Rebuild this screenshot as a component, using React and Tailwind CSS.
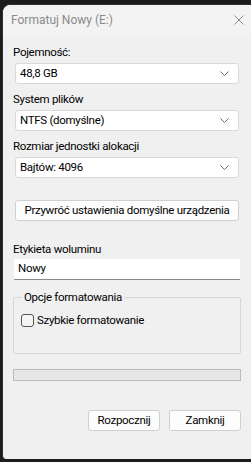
import React from "react";

const Chevron = () => (
  <svg width="9" height="5" viewBox="0 0 9 5" className="shrink-0">
    <path d="M0.5 0.5 L4.5 4.5 L8.5 0.5" fill="none" stroke="#6b6b6b" strokeWidth="1" />
  </svg>
);

function Combo({ value }) {
  return (
    <div className="mx-[12px] h-[21px] flex items-center justify-between bg-white border border-[#d9d9d9] rounded-[3px] pl-[4px] pr-[9px]">
      <span>{value}</span>
      <Chevron />
    </div>
  );
}

export default function App() {
  return (
    <div className="w-[251px] h-[462px] bg-[#1c1c1c] pt-[4px] pl-[2px] pb-[3px] overflow-hidden" style={{ fontFamily: 'Roboto, "Liberation Sans", sans-serif' }}>
      <div className="h-full bg-[#f0f0f0] rounded-tl-[8px] rounded-bl-[4px] flex flex-col border-l border-t border-[#2e2e2e]">
        <div className="h-[30px] bg-[#f3f3f3] rounded-tl-[8px] flex items-center justify-between pl-[8px] pr-[7px]">
          <span className="text-[12px] text-[#8a8a8a] whitespace-nowrap">Formatuj Nowy (E:)</span>
          <svg width="10" height="10" viewBox="0 0 10 10">
            <path d="M0.5 0.5 L9.5 9.5 M9.5 0.5 L0.5 9.5" stroke="#8a8a8a" strokeWidth="1" />
          </svg>
        </div>
        <div className="flex flex-col text-[11.5px] tracking-[-0.3px] text-black whitespace-nowrap">
          <div className="mt-[9px] mb-[3px] px-[10px] leading-[16px]">Pojemność:</div>
          <Combo value="48,8 GB" />
          <div className="mt-[7px] mb-[3px] px-[10px] leading-[16px]">System plików</div>
          <Combo value="NTFS (domyślne)" />
          <div className="mt-[7px] mb-[3px] px-[10px] leading-[16px]">Rozmiar jednostki alokacji</div>
          <Combo value="Bajtów: 4096" />
          <div className="mt-[22px] mx-[12px] h-[21px] bg-[#fdfdfd] border border-[#d0d0d0] rounded-[3px] flex items-center justify-center">
            Przywróć ustawienia domyślne urządzenia
          </div>
          <div className="mt-[20px] mb-[2px] px-[10px] leading-[16px]">Etykieta woluminu</div>
          <div className="mx-[11px] h-[21px] bg-white border-b border-[#8a8a8a] flex items-center pl-[4px]">Nowy</div>
          <div className="relative mt-[17px] mx-[10px] h-[57px] border border-[#d6d6d6] rounded-[2px]">
            <span className="absolute left-[8px] top-[-9px] bg-[#f0f0f0] px-[2px] leading-[16px]">Opcje formatowania</span>
            <div className="mt-[14px] ml-[7px] flex items-center gap-[3px]">
              <div className="w-[13px] h-[13px] border border-[#555] rounded-[3px] bg-[#f5f5f5]" />
              <span>Szybkie formatowanie</span>
            </div>
          </div>
          <div className="mt-[15px] mx-[10px] h-[12px] bg-[#e6e6e6] border border-[#bcbcbc]" />
          <div className="mt-[29px] flex justify-end gap-[9px] pr-[10px]">
            <div className="w-[72px] h-[21px] bg-[#fdfdfd] border border-[#d0d0d0] rounded-[3px] flex items-center justify-center">Rozpocznij</div>
            <div className="w-[72px] h-[21px] bg-[#fdfdfd] border border-[#d0d0d0] rounded-[3px] flex items-center justify-center">Zamknij</div>
          </div>
        </div>
      </div>
    </div>
  );
}
